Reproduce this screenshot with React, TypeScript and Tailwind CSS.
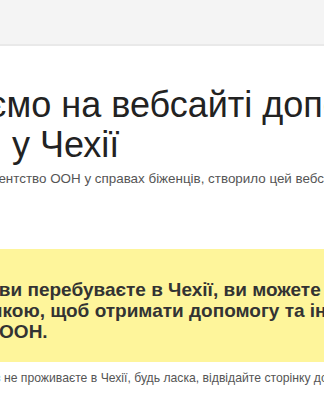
import React from "react";

function App() {
  return (
    <div className="min-h-[400px] w-[324px] overflow-hidden bg-white font-['Liberation_Sans',Arial,sans-serif]">
      <header className="h-[46px] border-b-2 border-[#e9e9e9] bg-[#f4f4f4]" />
      <main className="-ml-[80px] w-[820px] whitespace-nowrap">
        <h1 className="mt-[39px] text-[36px] leading-[40px] font-normal text-[#222]">
          Вітаємо на вебсайті допомоги УВКБ
          <br />
          ООН у Чехії
        </h1>
        <p className="mt-1 pl-[10px] text-[13.4px] leading-5 text-[#555]">
          УВКБ — Агентство ООН у справах біженців, створило цей вебсайт, щоб надати інформацію.
        </p>
        <section className="mt-[60px] bg-[#fef59b] pl-[23px] pt-[30px] pb-[20px] text-[19px] leading-[21px] font-bold text-[#333]">
          Якщо ви перебуваєте в Чехії, ви можете скористатися цією
          <br />
          сторінкою, щоб отримати допомогу та інформацію від
          <br />
          УВКБ ООН.
        </section>
        <p className="mt-[6px] pl-[15px] text-[12.2px] leading-5 text-[#555]">
          Якщо зараз не проживаєте в Чехії, будь ласка, відвідайте сторінку допомоги.
        </p>
      </main>
    </div>
  );
}

export default App;
